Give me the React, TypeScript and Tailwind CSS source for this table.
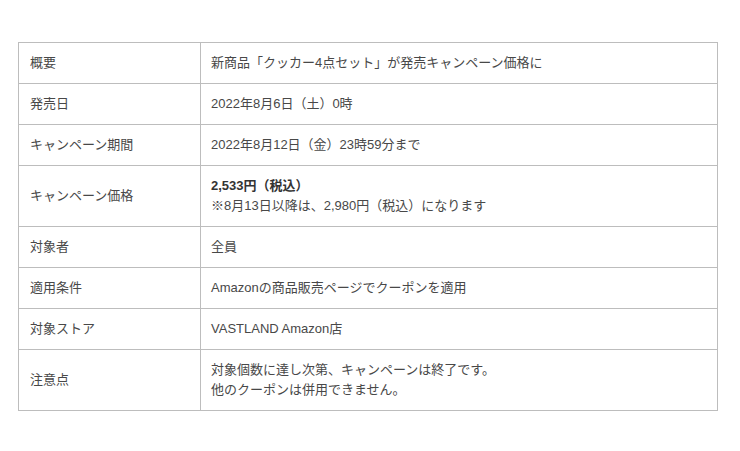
import React from "react";

const rows: { label: string; value: React.ReactNode }[] = [
  { label: "概要", value: "新商品「クッカー4点セット」が発売キャンペーン価格に" },
  { label: "発売日", value: "2022年8月6日（土）0時" },
  { label: "キャンペーン期間", value: "2022年8月12日（金）23時59分まで" },
  {
    label: "キャンペーン価格",
    value: (
      <>
        <span className="font-bold text-[#333]">2,533円（税込）</span>
        <br />
        ※8月13日以降は、2,980円（税込）になります
      </>
    ),
  },
  { label: "対象者", value: "全員" },
  { label: "適用条件", value: "Amazonの商品販売ページでクーポンを適用" },
  { label: "対象ストア", value: "VASTLAND Amazon店" },
  {
    label: "注意点",
    value: (
      <>
        対象個数に達し次第、キャンペーンは終了です。
        <br />
        他のクーポンは併用できません。
      </>
    ),
  },
];

export default function App() {
  return (
    <div
      className="w-[740px] h-[451px] bg-white pt-[42px] pl-[18px]"
      style={{ fontFamily: '"Liberation Sans", "Noto Sans CJK JP", sans-serif' }}
    >
      <table className="w-[700px] border-collapse text-[13px] leading-[20px] text-[#484848]">
        <tbody>
          {rows.map((r) => (
            <tr key={r.label}>
              <td className="w-[182px] border border-[#bdbdbd] pl-[11px] pr-2 py-[10px] align-middle">
                {r.label}
              </td>
              <td className="border border-[#bdbdbd] pl-[10px] pr-2 py-[10px] align-middle">
                {r.value}
              </td>
            </tr>
          ))}
        </tbody>
      </table>
    </div>
  );
}
